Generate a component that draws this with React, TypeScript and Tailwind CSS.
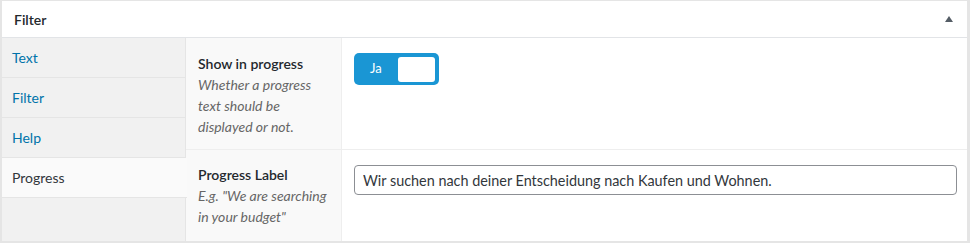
import React, { useState } from 'react';

const tabs = ['Text', 'Filter', 'Help', 'Progress'];

export default function App() {
  const [active, setActive] = useState('Progress');
  const [on, setOn] = useState(true);
  const [label, setLabel] = useState('Wir suchen nach deiner Entscheidung nach Kaufen und Wohnen.');

  return (
    <div
      className="w-[970px] h-[243px] bg-white text-[14px] text-[#32373c]"
      style={{ fontFamily: 'Lato, "Noto Sans", sans-serif' }}
    >
      <div className="h-full flex flex-col border-t border-l-2 border-r-[3px] border-b-2 border-[#e5e5e5]">
        {/* Kopfzeile */}
        <div className="h-[37px] flex items-center justify-between pl-3 pr-[12px] border-b border-[#e2e4e7] shrink-0">
          <span className="font-semibold text-[14px] text-[#23282d]">Filter</span>
          <svg width="10" height="8" viewBox="0 0 10 8" className="mr-[1px]">
            <path d="M5 1 L9 7 L1 7 Z" fill="#555d66" />
          </svg>
        </div>

        <div className="flex flex-1 min-h-0">
          {/* Tabs */}
          <div className="w-[184px] shrink-0 bg-[#f1f1f1] border-r border-[#e5e5e5] flex flex-col">
            {tabs.map((t) => (
              <button
                key={t}
                onClick={() => setActive(t)}
                className={
                  active === t
                    ? 'h-[40px] text-left pl-[10px] pb-[1px] border-b border-[#e5e5e5] bg-[#fafafa] text-[#32373c] w-[185px] relative z-10'
                    : 'h-[40px] text-left pl-[10px] pb-[1px] border-b border-[#e5e5e5] bg-[#f1f1f1] text-[#0073aa]'
                }
              >
                {t}
              </button>
            ))}
          </div>

          {/* Felder */}
          <div className="flex-1 flex flex-col">
            <div className="flex h-[112px] border-b border-[#eeeeee]">
              <div className="w-[156px] shrink-0 bg-[#f9f9f9] border-r border-[#eeeeee] pt-[15px] pl-3 pr-3 leading-[21px]">
                <div className="font-semibold text-[#23282d]">Show in progress</div>
                <div className="italic text-[#666]">Whether a progress text should be displayed or not.</div>
              </div>
              <div className="flex-1 pt-[15px] pl-[12px]">
                <button
                  onClick={() => setOn(!on)}
                  className="w-[85px] h-[32px] rounded-[5px] bg-[#1a96d4] flex items-center justify-between pl-[16px] pr-[4px]"
                >
                  <span className="text-white text-[13px]">{on ? 'Ja' : 'Nein'}</span>
                  <span className="w-[37px] h-[25px] bg-white rounded-[3px]" />
                </button>
              </div>
            </div>
            <div className="flex flex-1">
              <div className="w-[156px] shrink-0 bg-[#f9f9f9] border-r border-[#eeeeee] pt-[14px] pl-3 pr-3 leading-[21px]">
                <div className="font-semibold text-[#23282d]">Progress Label</div>
                <div className="italic text-[#666]">E.g. "We are searching in your budget"</div>
              </div>
              <div className="flex-1 pt-[15px] pl-[12px] pr-[10px]">
                <input
                  value={label}
                  onChange={(e) => setLabel(e.target.value)}
                  className="w-full h-[30px] border border-[#8c8f94] rounded-[4px] px-[8px] text-[14.4px] text-[#32373c] bg-white outline-none"
                />
              </div>
            </div>
          </div>
        </div>
      </div>
    </div>
  );
}
